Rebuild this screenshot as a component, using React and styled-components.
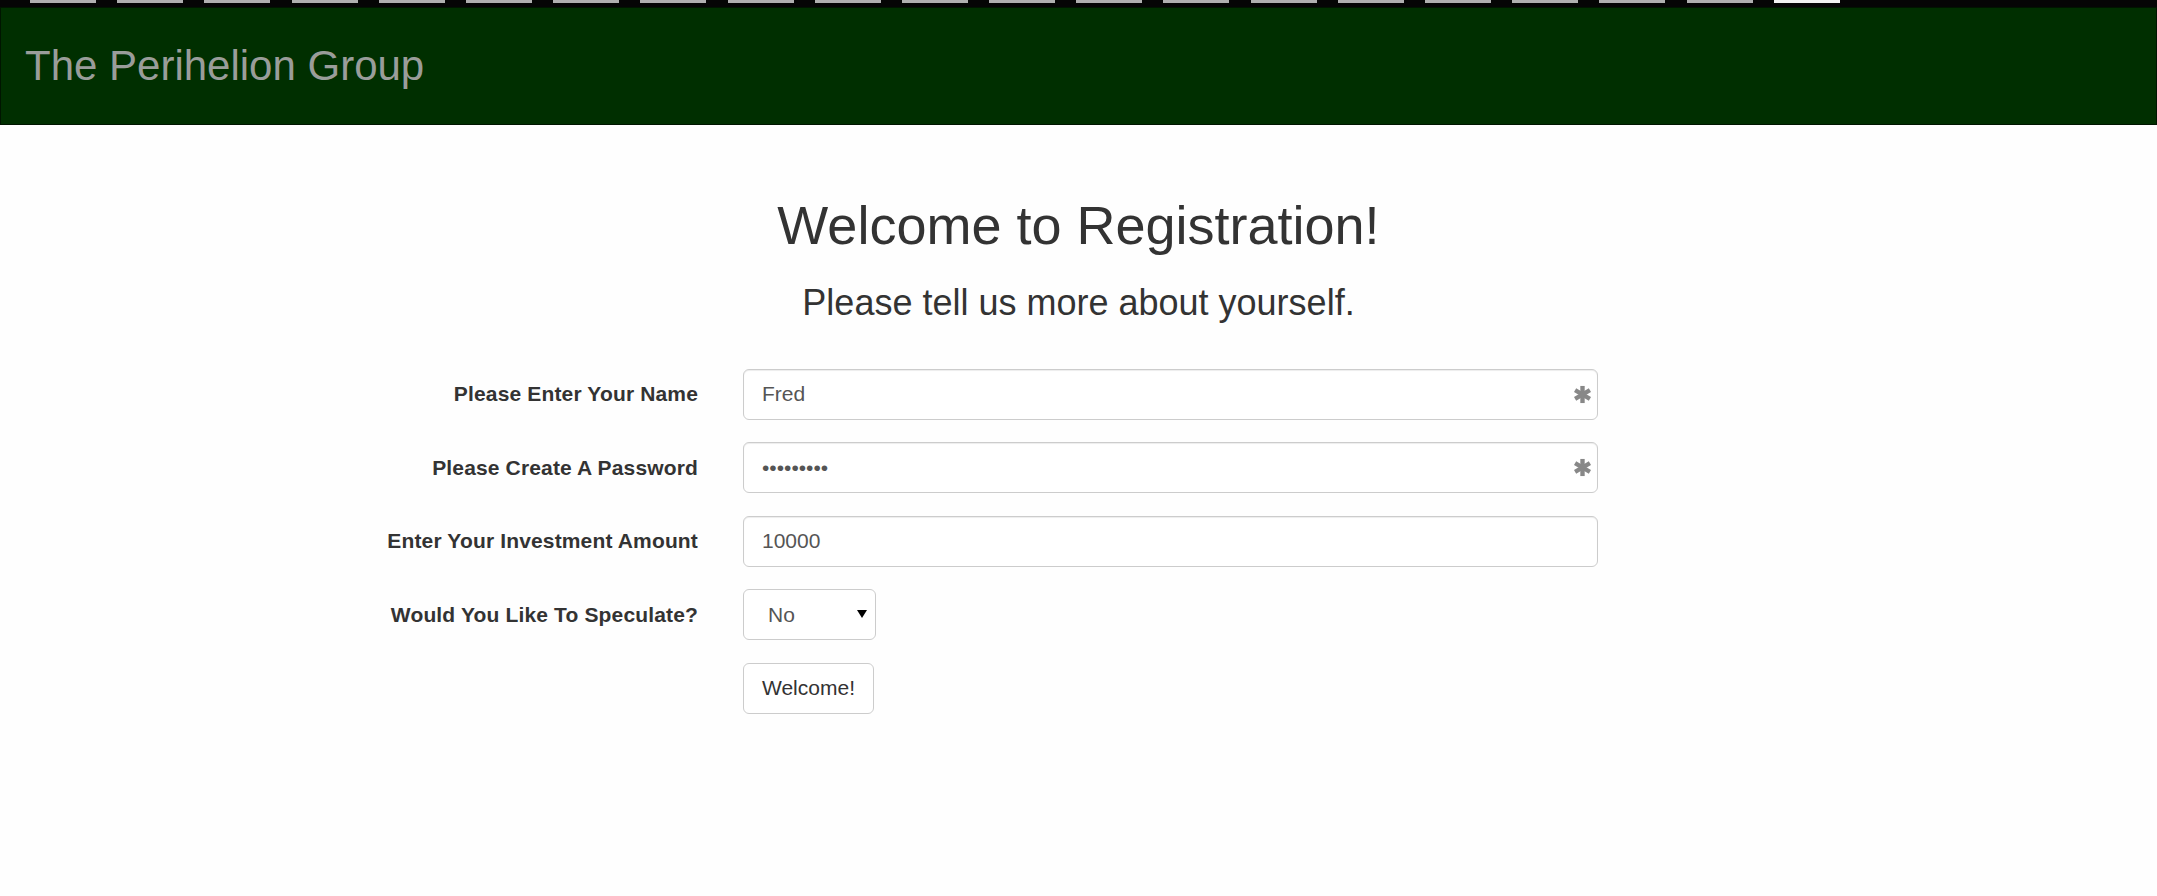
import styled, { createGlobalStyle } from "styled-components";

const Global = createGlobalStyle`
  html, body {
    margin: 0;
    padding: 0;
    background: #fefefe;
    font-family: "Liberation Sans", Arial, Helvetica, sans-serif;
    color: #333;
  }
  * { box-sizing: border-box; }
`;

const Strip = styled.div`
  display: flex;
  gap: 21.2px;
  height: 7px;
  padding-left: 30px;
  background: #050505;
`;

const Tick = styled.span`
  width: 66px;
  height: 3px;
  background: ${(props) => (props.active ? "#f2f2f2" : "#b0b0b0")};
`;

const Navbar = styled.header`
  display: flex;
  align-items: center;
  height: 118px;
  padding-left: 24px;
  background: #002f00;
  border: 1px solid #001500;
`;

const Brand = styled.span`
  font-size: 42px;
  color: #9a9d9a;
`;

const Main = styled.main`
  padding-top: 71px;
`;

const Title = styled.h1`
  margin: 0;
  text-align: center;
  font-size: 54px;
  font-weight: 400;
  line-height: 1.1;
  color: #333;
`;

const Subtitle = styled.h3`
  margin: 28px 0 0;
  text-align: center;
  font-size: 36px;
  font-weight: 400;
  line-height: 1.1;
  color: #333;
`;

const Form = styled.form`
  display: grid;
  grid-template-columns: 720px 900px;
  row-gap: 22.5px;
  margin-top: 46px;
`;

const Label = styled.label`
  display: flex;
  align-items: center;
  justify-content: flex-end;
  padding: 0 22px;
  font-size: 21px;
  font-weight: 700;
  letter-spacing: 0.15px;
  color: #333;
`;

const Field = styled.div`
  position: relative;
  padding: 0 22px 0 23px;
`;

const Input = styled.input`
  display: block;
  width: 100%;
  height: 51px;
  padding: 9px 18px;
  font-family: inherit;
  font-size: 21px;
  color: #555;
  background: #fff;
  border: 1px solid #ccc;
  border-radius: 6px;
  box-shadow: inset 0 1px 1px rgba(0, 0, 0, 0.075);
  outline: none;
`;

const Feedback = styled.span`
  position: absolute;
  top: 16px;
  right: 28px;
  width: 19px;
  height: 19px;
  display: flex;
`;

const SelectBox = styled.div`
  position: relative;
  width: 133px;
`;

const Select = styled.select`
  display: block;
  width: 100%;
  height: 51px;
  padding: 0 0 0 24px;
  font-family: inherit;
  font-size: 21px;
  color: #555;
  background: #fff;
  border: 1px solid #ccc;
  border-radius: 6px;
  appearance: none;
  outline: none;
`;

const Caret = styled.span`
  position: absolute;
  top: 21px;
  right: 9px;
  border-left: 5px solid transparent;
  border-right: 5px solid transparent;
  border-top: 8px solid #000;
  pointer-events: none;
`;

const Button = styled.button`
  height: 51px;
  padding: 9px 18px;
  font-family: inherit;
  font-size: 21px;
  color: #333;
  background: #fff;
  border: 1px solid #ccc;
  border-radius: 6px;
`;

const Asterisk = () => (
  <svg viewBox="0 0 20 20" width="19" height="19">
    <g stroke="#888" strokeWidth="4.6" strokeLinecap="butt">
      <line x1="10" y1="1" x2="10" y2="19" />
      <line x1="2.2" y1="5.5" x2="17.8" y2="14.5" />
      <line x1="2.2" y1="14.5" x2="17.8" y2="5.5" />
    </g>
  </svg>
);

const ticks = Array.from({ length: 21 }, (_, i) => i);

function App() {
  return (
    <>
      <Global />
      <Strip>
        {ticks.map((i) => (
          <Tick key={i} active={i === 20 ? 1 : 0} />
        ))}
      </Strip>
      <Navbar>
        <Brand>The Perihelion Group</Brand>
      </Navbar>
      <Main>
        <Title>Welcome to Registration!</Title>
        <Subtitle>Please tell us more about yourself.</Subtitle>
        <Form onSubmit={(e) => e.preventDefault()}>
          <Label>Please Enter Your Name</Label>
          <Field>
            <Input type="text" defaultValue="Fred" />
            <Feedback>
              <Asterisk />
            </Feedback>
          </Field>

          <Label>Please Create A Password</Label>
          <Field>
            <Input type="password" defaultValue="secretpw1" />
            <Feedback>
              <Asterisk />
            </Feedback>
          </Field>

          <Label>Enter Your Investment Amount</Label>
          <Field>
            <Input type="text" defaultValue="10000" />
          </Field>

          <Label>Would You Like To Speculate?</Label>
          <Field>
            <SelectBox>
              <Select defaultValue="No">
                <option>No</option>
                <option>Yes</option>
              </Select>
              <Caret />
            </SelectBox>
          </Field>

          <span />
          <Field>
            <Button type="submit">Welcome!</Button>
          </Field>
        </Form>
      </Main>
    </>
  );
}

export default App;
